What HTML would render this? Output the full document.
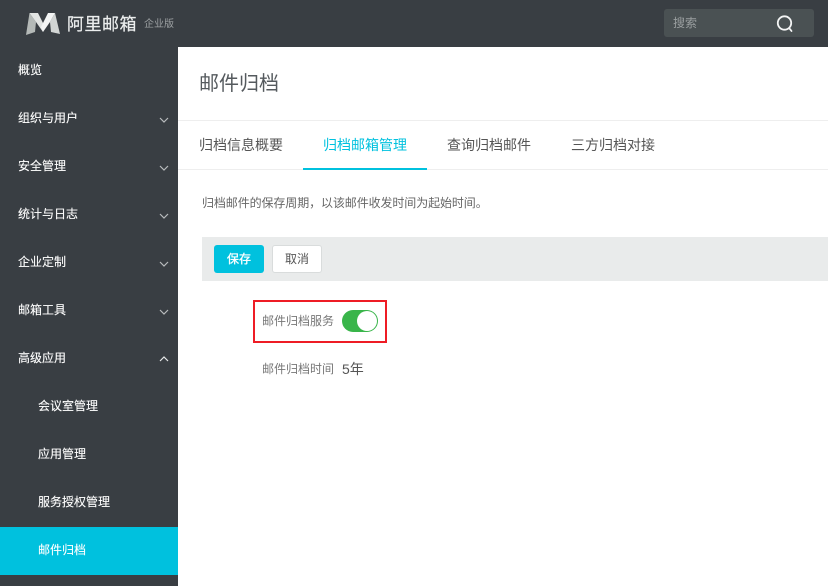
<!DOCTYPE html>
<html lang="zh">
<head>
<meta charset="utf-8">
<style>
html,body{margin:0;padding:0;background:#fff}
#p{position:relative;width:828px;height:586px;overflow:hidden;background:#fff;font-family:"Liberation Sans","Noto Sans CJK SC",sans-serif;color:#4a4f54}
#p div,#p span{position:absolute;white-space:nowrap}
.bar{left:0;top:0;width:828px;height:47px;background:#393e43}
.side{left:0;top:47px;width:178px;height:539px;background:#393e43}
.m{left:18px;font-size:12px;line-height:16px;color:#fff;font-weight:400;-webkit-text-stroke:.12px #fff}
.s{left:38px}
.act{left:0;top:527px;width:178px;height:48px;background:#00c1de}
.tab{top:136px;font-size:14px;line-height:18px;color:#555}
svg{position:absolute}
</style>
</head>
<body>
<div id="p">
<div class="bar"></div>
<div class="side"></div>
<svg style="left:26px;top:13px" width="35" height="23" viewBox="0 0 35 23">
<path d="M3.500 0L0 22L9 19L10 9Z" fill="#b4b9b7"/>
<path d="M3.500 0H12L19 14L17 19L10 9Z" fill="#e2e4e3"/>
<path d="M29 0H22L15 14L17 19L24 9Z" fill="#f4f5f5"/>
<path d="M29 0L34 21L25 19L24 9Z" fill="#d2d5d4"/>
</svg>
<div style="left:67px;top:13px;font-size:17px;line-height:24px;letter-spacing:.5px;color:#eceeee;-webkit-text-stroke:.2px #eceeee">阿里邮箱</div>
<div style="left:144px;top:18px;font-size:10px;line-height:14px;color:#9da1a3">企业版</div>
<div style="left:664px;top:9px;width:150px;height:28px;background:#4a5153;border-radius:3px"></div>
<div style="left:673px;top:15px;font-size:12px;line-height:17px;color:#9a9fa0">搜索</div>
<svg style="left:775px;top:13px" width="20" height="20" viewBox="0 0 20 20" fill="none" stroke="#f4f5f5" stroke-width="1.800">
<circle cx="9.500" cy="10" r="6.700"/><path d="M14.500 15.500L16.500 18" stroke-linecap="round"/>
</svg>

<div class="m" style="top:62px">概览</div>
<div class="m" style="top:110px">组织与用户</div>
<div class="m" style="top:158px">安全管理</div>
<div class="m" style="top:206px">统计与日志</div>
<div class="m" style="top:254px">企业定制</div>
<div class="m" style="top:302px">邮箱工具</div>
<div class="m" style="top:350px">高级应用</div>
<div class="m s" style="top:398px">会议室管理</div>
<div class="m s" style="top:446px">应用管理</div>
<div class="m s" style="top:494px">服务授权管理</div>
<div class="act"></div>
<div class="m s" style="top:542px">邮件归档</div>

<svg style="left:158px;top:116px" width="12" height="8" viewBox="0 0 12 8" fill="none" stroke="#b9bcbe" stroke-width="1.200"><path d="M2 2L6 6L10 2"/></svg>
<svg style="left:158px;top:164px" width="12" height="8" viewBox="0 0 12 8" fill="none" stroke="#b9bcbe" stroke-width="1.200"><path d="M2 2L6 6L10 2"/></svg>
<svg style="left:158px;top:212px" width="12" height="8" viewBox="0 0 12 8" fill="none" stroke="#b9bcbe" stroke-width="1.200"><path d="M2 2L6 6L10 2"/></svg>
<svg style="left:158px;top:260px" width="12" height="8" viewBox="0 0 12 8" fill="none" stroke="#b9bcbe" stroke-width="1.200"><path d="M2 2L6 6L10 2"/></svg>
<svg style="left:158px;top:308px" width="12" height="8" viewBox="0 0 12 8" fill="none" stroke="#b9bcbe" stroke-width="1.200"><path d="M2 2L6 6L10 2"/></svg>
<svg style="left:158px;top:355px" width="12" height="8" viewBox="0 0 12 8" fill="none" stroke="#e6e8e8" stroke-width="1.200"><path d="M2 6L6 2L10 6"/></svg>

<div style="left:199px;top:70px;font-size:20px;line-height:28px;color:#555a5e">邮件归档</div>
<div style="left:178px;top:120px;width:650px;height:1px;background:#eeeeee"></div>
<div style="left:178px;top:169px;width:650px;height:1px;background:#eeeeee"></div>
<div class="tab" style="left:199px">归档信息概要</div>
<div class="tab" style="left:323px;color:#00c1de">归档邮箱管理</div>
<div class="tab" style="left:447px">查询归档邮件</div>
<div class="tab" style="left:571px">三方归档对接</div>
<div style="left:303px;top:168px;width:124px;height:2px;background:#00c1de"></div>

<div style="left:202px;top:195px;font-size:12px;line-height:17px;color:#666;letter-spacing:-.1px">归档邮件的保存周期，以该邮件收发时间为起始时间。</div>

<div style="left:202px;top:237px;width:626px;height:44px;background:#e9ebeb"></div>
<div style="left:214px;top:245px;width:50px;height:28px;background:#00c1de;border-radius:3px;color:#fff;font-size:12px;line-height:28px;text-align:center;font-weight:400;-webkit-text-stroke:.3px #fff">保存</div>
<div style="left:272px;top:245px;width:48px;height:26px;background:#fff;border:1px solid #d9dcdc;border-radius:3px;color:#555;font-size:12px;line-height:26px;text-align:center">取消</div>

<div style="left:253px;top:300px;width:130px;height:39px;border:2px solid #ee1c25"></div>
<div style="left:262px;top:313px;font-size:12px;line-height:17px;color:#777">邮件归档服务</div>
<div style="left:342px;top:310px;width:36px;height:22px;background:#39b54a;border-radius:11px"></div>
<div style="left:357px;top:311px;width:20px;height:20px;background:#fff;border-radius:50%"></div>

<div style="left:262px;top:361px;font-size:12px;line-height:17px;color:#777">邮件归档时间</div>
<div style="left:342px;top:360px;font-size:14px;line-height:18px;color:#555">5年</div>
</div>
</body>
</html>
